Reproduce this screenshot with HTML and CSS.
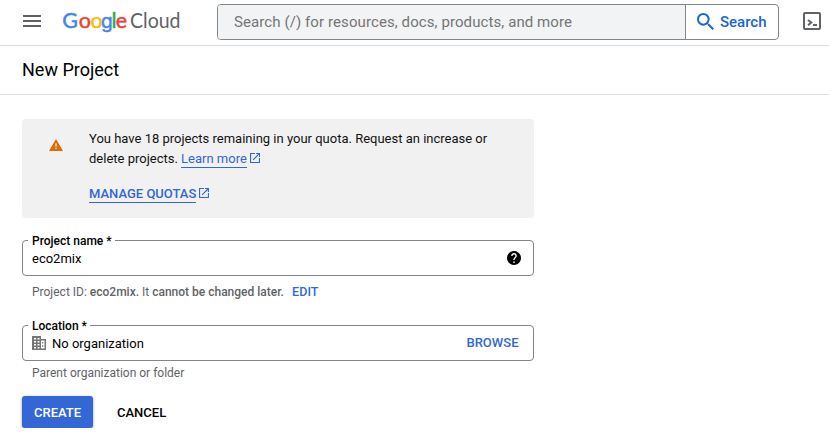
FILE: index.html
```html
<!DOCTYPE html>
<html lang="en">
<head>
<meta charset="utf-8">
<title>New Project</title>
<link rel="stylesheet" href="styles.css">
</head>
<body>
<header class="topbar">
  <svg class="menu" viewBox="0 0 18 12"><path d="M0 0h18v2H0zM0 5h18v2H0zM0 10h18v2H0z"/></svg>
  <svg class="logo" viewBox="0 0 118 28" role="img" aria-label="Google Cloud">
    <text class="logo-google" y="20"><tspan class="b" x="-0.8">G</tspan><tspan class="r" x="15.7">o</tspan><tspan class="y" x="27.4">o</tspan><tspan class="b round-g" x="38">g</tspan><tspan class="g" x="48.600">l</tspan><tspan class="r" x="52.800">e</tspan></text>
    <text class="logo-cloud" x="67" y="20" textLength="50.500" lengthAdjust="spacingAndGlyphs">Cloud</text>
  </svg>
  <div class="search">
    <div class="search-input">Search (/) for resources, docs, products, and more</div>
    <div class="search-button">
      <svg class="lens" viewBox="3 3 17.5 17.5"><path d="M15.500 14h-.79l-.28-.27A6.471 6.471 0 0 0 16 9.500 6.500 6.500 0 1 0 9.500 16c1.610 0 3.090-.59 4.230-1.570l.27.28v.79l5 4.990L20.490 19l-4.990-5zm-6 0C7.010 14 5 11.990 5 9.500S7.010 5 9.500 5 14 7.010 14 9.500 11.990 14 9.500 14z"/></svg>
      <span class="search-text">Search</span>
    </div>
  </div>
  <svg class="shell" viewBox="0 0 18 18"><rect x="1" y="1" width="16" height="16" rx="1"/><path d="M5 8l3.300 2.600L5 13.200M10 13h4"/></svg>
</header>
<div class="titlebar"><h1>New Project</h1></div>
<main>
  <section class="notice">
    <svg class="warn" viewBox="0 0 14 12"><path fill-rule="evenodd" d="M7 0l7 12H0zM6.400 4.300v3.400h1.200V4.300zM6.400 8.800V10h1.200V8.800z"/></svg>
    <div class="notice-body">
      <p>You have 18 projects remaining in your quota. Request an increase or<br>delete projects. <a class="learn">Learn more</a><svg class="ext" viewBox="3 3 18 18"><path d="M19 19H5V5h7V3H3v18h18v-9h-2v7zM14 3v2h3.590l-9.830 9.830 1.410 1.410L19 6.410V10h2V3h-7z"/></svg></p>
      <p class="manage"><a>MANAGE QUOTAS</a><svg class="ext" viewBox="3 3 18 18"><path d="M19 19H5V5h7V3H3v18h18v-9h-2v7zM14 3v2h3.590l-9.830 9.830 1.410 1.410L19 6.410V10h2V3h-7z"/></svg></p>
    </div>
  </section>
  <div class="field">
    <span class="label name-label">Project name *</span>
    <span class="value">eco2mix</span>
    <svg class="help" viewBox="2 2 20 20"><path d="M12 2C6.480 2 2 6.480 2 12s4.480 10 10 10 10-4.480 10-10S17.520 2 12 2zm1 17h-2v-2h2v2zm2.070-7.750l-.9.920C13.450 12.900 13 13.500 13 15h-2v-.5c0-1.100.45-2.100 1.170-2.830l1.240-1.260c.37-.36.59-.86.59-1.410 0-1.100-.9-2-2-2s-2 .9-2 2H8c0-2.210 1.790-4 4-4s4 1.790 4 4c0 .88-.36 1.680-.93 2.250z"/></svg>
  </div>
  <p class="hint id-hint">Project ID: <b>eco2mix.</b> It <b>cannot be changed later.</b><a class="edit">EDIT</a></p>
  <div class="field">
    <span class="label loc-label">Location *</span>
    <svg class="org" viewBox="0 0 14 14"><path fill-rule="evenodd" d="M0 0h9v3h5v11H0zM2 2v1.500h2V2zM5.500 2v1.500h2V2zM2 5v1.500h2V5zM5.500 5v1.500h2V5zM2 8v1.500h2V8zM5.500 8v1.500h2V8zM2 11v1.500h2V11zM5.500 11v1.500h2V11zM9 4.500v8h3.500v-8zM10 6h1.300v1.500H10zM10 9.200h1.300v1.500H10z"/></svg>
    <span class="value">No organization</span>
    <a class="browse">BROWSE</a>
  </div>
  <p class="hint loc-hint">Parent organization or folder</p>
  <div class="actions"><button class="create">CREATE</button><button class="cancel">CANCEL</button></div>
</main>
</body>
</html>
```
FILE: styles.css
```css
* { box-sizing: border-box; }
body { margin: 0; background: #fff; color: #000; font: 13px/20px Roboto, "Liberation Sans", sans-serif; }
p, h1 { margin: 0; }
svg { display: block; flex: none; }
.topbar { display: flex; align-items: flex-start; height: 46px; border-bottom: 1px solid #dadce0; }
.menu { width: 18px; height: 12px; margin: 15px 0 0 23px; fill: #5f6368; }
.logo { width: 118px; height: 28px; margin: 8px 0 0 22px; overflow: visible; }
.logo-google { font: 400 21.500px Lato, sans-serif; stroke-width: .5px; }
.logo-cloud { font: 400 21px Lato, sans-serif; fill: #5f6368; }
.logo-google .round-g { font-family: Inter, sans-serif; font-size: 19px; }
.b { fill: #4285f4; stroke: #4285f4; }
.r { fill: #ea4335; stroke: #ea4335; }
.y { fill: #fbbc04; stroke: #fbbc04; }
.g { fill: #34a853; stroke: #34a853; }
.search { display: flex; width: 562px; height: 36px; margin: 4px 0 0 36px; border: 1px solid #80868b; border-radius: 4px; overflow: hidden; }
.search-input { width: 468px; padding-left: 16px; background: #f1f3f4; color: #757575; font-size: 15px; letter-spacing: .09px; line-height: 34px; border-right: 1px solid #80868b; white-space: nowrap; }
.search-button { display: flex; align-items: center; padding-left: 11px; color: #1967d2; font-size: 15px; font-weight: 500; }
.lens { width: 17px; height: 17px; margin: -1px 6px 0 0; fill: #1967d2; }
.shell { width: 18px; height: 18px; margin: 12px 0 0 24px; fill: none; stroke: #5f6368; stroke-width: 2; }
.titlebar { display: flex; align-items: center; height: 49px; padding-left: 22px; border-bottom: 1px solid #dadce0; }
h1 { font-size: 18px; font-weight: 400; line-height: 24px; }
main { width: 534px; padding: 24px 0 0 22px; }
.notice { display: flex; height: 99px; padding-top: 10px; background: #f1f1f1; border-radius: 4px; margin-bottom: 22px; color: #111; }
.warn { width: 14px; height: 12px; margin: 10px 19px 0 27px; fill: #e06c00; }
.notice-body { padding-left: 7px; white-space: nowrap; }
.notice a { color: #3367d6; border-bottom: 1px solid #3367d6; padding-bottom: 1px; }
.ext { display: inline-block; width: 10px; height: 10px; margin-left: 3px; fill: #3367d6; }
.manage { margin-top: 15px; }
.manage a { font-weight: 500; }
.field { position: relative; display: flex; align-items: center; height: 36px; padding: 1px 12px 0 9px; border: 1px solid #80868b; border-radius: 4px; }
.label { position: absolute; left: 5px; top: -8px; padding: 0 3px 0 4px; background: #fff; font-size: 12px; font-weight: 500; line-height: 16px; }
.value { flex: 1; }
.help { width: 14px; height: 14px; margin-bottom: 2px; }
.hint { padding: 8px 0 0 10px; color: #5f6368; font-size: 12px; line-height: 16px; height: 24px; }
.hint b { font-weight: 500; }
.hint .edit { margin-left: 8px; color: #3367d6; font-size: 12.500px; font-weight: 500; letter-spacing: .1px; }
.id-hint { margin-bottom: 25px; }
.loc-hint { padding-top: 4px; }
.org { width: 14px; height: 14px; margin: -1px 6px 0 0; fill: #757575; }
.browse { color: #3367d6; font-weight: 500; margin: -2px 2.500px 0 0; }
.actions { display: flex; margin-top: 11px; }
button { height: 32px; padding: 0 12px; border: 0; border-radius: 3px; font: 500 13px Roboto, sans-serif; }
.create { width: 71px; background: #3367d6; color: #fff; box-shadow: 0 1px 3px rgba(0,0,0,.4); }
.cancel { margin-left: 12px; background: none; color: #000; }
```
